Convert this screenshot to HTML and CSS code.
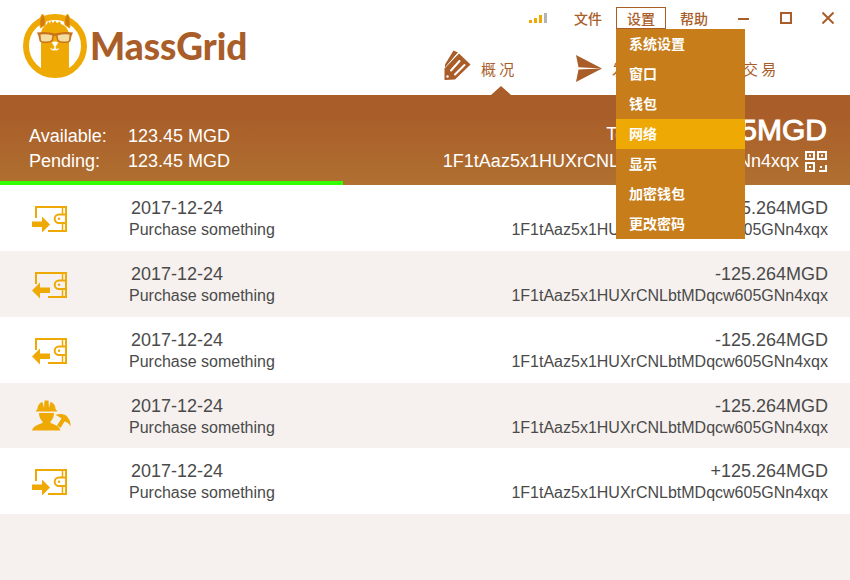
FILE: index.html
```html
<!DOCTYPE html>
<html lang="zh-CN">
<head>
<meta charset="utf-8">
<meta name="viewport" content="width=device-width, initial-scale=1">
<title>MassGrid</title>
<link rel="stylesheet" href="styles.css">
</head>
<body>
<svg width="0" height="0" class="defs" aria-hidden="true">
  <symbol id="wallet" viewBox="0 0 36 27">
    <g fill="none" stroke="currentColor" stroke-width="2">
      <path d="M4 12V1H34V25H16"/>
      <path d="M34 8.500H27a4.300 4.300 0 0 0 0 8.600H34"/>
      <path d="M30.500 2V8.500M30.500 17V24" stroke-width="1.500"/>
    </g>
    <circle cx="27" cy="12.800" r="1.200" fill="currentColor"/>
  </symbol>
  <symbol id="receive" viewBox="0 0 36 27">
    <use href="#wallet"/>
    <path d="M0 15.500H10V10.500L18 18.500L10 26.500V21H0Z" fill="currentColor"/>
  </symbol>
  <symbol id="send" viewBox="0 0 36 27">
    <use href="#wallet"/>
    <path d="M18 15.500H8V10.500L0 18.500L8 26.500V21H18Z" fill="currentColor"/>
  </symbol>
  <symbol id="miner" viewBox="0 0 39 31">
    <g fill="currentColor">
      <path d="M4 11.500C4 10 5 9.500 5.500 9C5.500 5 8 2.500 10.500 2L12 8L12.500 0.500H16.500L17 8L18.500 2C21 2.500 23.500 5 23.500 9C24 9.500 25 10 25 11.500Z"/>
      <path d="M7 13H22C22 17 20.500 19.500 18.500 21.500V23C22 24.500 27 25.500 28.500 30.500H0C1.500 25.500 7 24.500 10.500 23V21.500C8.500 19.500 7 17 7 13Z"/>
      <path d="M23.500 15C27 13.500 31 14 34 15.500C37 18 39 22 38.500 26.500C37 23.500 35 22 32.500 21.500L28.500 28L25 25.500L29.500 18.500C27.500 17 25.500 16 23.500 15Z"/>
    </g>
  </symbol>
</svg>

<header class="header">
  <div class="brand">
    <svg class="brand-mark" viewBox="0 0 64 64" aria-hidden="true">
      <circle cx="32" cy="32" r="29" fill="#fff" stroke="#efa905" stroke-width="6"/>
      <path d="M20 10Q31 3 44 10L42 16H22Z" fill="#fff"/>
      <path d="M18 58V25C17 18 19 13 24 10L25 7L27 9.500L28 6.500L30 9L32 6.500L34 9L37 7.500L38 10C44 12 47 18 46 25V58C38 64 26 64 18 58Z" fill="#efa905"/>
      <path d="M17.500 14C16 8 17 3 19.500 0C22 2 23 7 22 11ZM46.500 14C48 8 47 3 44.500 0C42 2 41 7 42 11Z" fill="#d47b10" stroke="#efa905"/>
      <path d="M14 18.500Q23 17 32 19.500Q41 17 50 18.500L48.500 22L47.500 27Q46 29 41 29Q35 29 34 26L33 22H31L30 26Q29 29 23 29Q18 29 16.500 27L15.500 22Z" fill="#c8731a"/>
      <path d="M17.500 20.500Q24 19.500 29.500 21.500L28.500 26Q27 27.500 23 27.500Q18 27.500 18 26ZM46.500 20.500Q40 19.500 34.500 21.500L35.500 26Q37 27.500 41 27.500Q46 27.500 46 26Z" fill="#f4dda0"/>
      <path d="M29 28.500Q32 27 35 28.500L32.500 32.500V34.500Q34 36 36 34.500Q34 37 32 36Q29 37 27.500 34.500Q30 36 31.500 34.500V32.500Z" fill="#fff" stroke="#fff" stroke-width=".5"/>
    </svg>
    <span class="brand-name">MassGrid</span>
  </div>

  <div class="tools">
    <div class="titlebar">
      <svg class="signal" viewBox="0 0 18 10" role="img" aria-label="signal">
        <path d="M0 7H3V10H0ZM5 5H8V10H5ZM10 2H13V10H10Z" fill="#efa905"/>
        <path d="M15 0H18V10H15Z" fill="#b3b3b3"/>
      </svg>
      <div class="menubar">
        <button class="menu-button" type="button">文件</button>
        <div class="menu-holder">
          <button class="menu-button is-open" type="button" aria-expanded="true">设置</button>
          <div class="menu">
            <button class="menu-item" type="button">系统设置</button>
            <button class="menu-item" type="button">窗口</button>
            <button class="menu-item" type="button">钱包</button>
            <button class="menu-item is-active" type="button">网络</button>
            <button class="menu-item" type="button">显示</button>
            <button class="menu-item" type="button">加密钱包</button>
            <button class="menu-item" type="button">更改密码</button>
          </div>
        </div>
        <button class="menu-button" type="button">帮助</button>
      </div>
      <div class="window-controls">
        <button class="window-button" type="button" aria-label="minimize"><svg viewBox="0 0 12 12"><path d="M0 7H11" stroke="currentColor" stroke-width="2"/></svg></button>
        <button class="window-button" type="button" aria-label="maximize"><svg viewBox="0 0 12 12"><path d="M1 1H11V11H1Z" fill="none" stroke="currentColor" stroke-width="2"/></svg></button>
        <button class="window-button" type="button" aria-label="close"><svg viewBox="0 0 12 12"><path d="M.5 .5L11.500 11.500M11.500 .5L.5 11.500" stroke="currentColor" stroke-width="2"/></svg></button>
      </div>
    </div>
    <nav class="nav">
      <a class="nav-item is-current" href="#">
        <svg class="nav-icon" viewBox="0 0 27 30" aria-hidden="true">
          <path d="M9.500 .5L14 2.500L1 18V14.500Z" fill="currentColor"/>
          <path d="M14 3L1 18" stroke="#fff"/>
          <path d="M15 3.500L26.500 14.500L11 29.500L.5 30V18.500Z" fill="currentColor"/>
          <path d="M7 20.500L15.500 11M11 24.500L20.500 15" stroke="#fff" stroke-width="2" stroke-linecap="round"/>
          <circle cx="3.500" cy="26.500" r="1.200" fill="#fff"/>
        </svg>
        <span>概 况</span>
      </a>
      <a class="nav-item" href="#">
        <svg class="nav-icon" viewBox="0 0 27 30" aria-hidden="true">
          <path d="M1 5L27 18.500L3.500 17.300ZM3.500 19.500L27 18.500L1 32Z" fill="currentColor"/>
        </svg>
        <span>发 送</span>
      </a>
      <a class="nav-item" href="#">
        <svg class="nav-icon" viewBox="0 0 27 30" aria-hidden="true">
          <path d="M3 11H24L18 5M24 19H3L9 25" fill="none" stroke="currentColor" stroke-width="3"/>
        </svg>
        <span>交 易</span>
      </a>
    </nav>
  </div>
</header>

<section class="balance">
  <dl class="funds">
    <dt>Available:</dt><dd>123.45 MGD</dd>
    <dt>Pending:</dt><dd>123.45 MGD</dd>
  </dl>
  <div class="account">
    <div class="total"><span>Total:</span><strong>123.45MGD</strong></div>
    <div class="address">
      <span>1F1tAaz5x1HUXrCNLbtMDqcw605GNn4xqx</span>
      <svg class="qr" viewBox="0 0 22 21" aria-hidden="true">
        <path d="M1 1H9V8H1ZM13 1H21V8H13ZM1 12H9V20H1Z" fill="none" stroke="#fff" stroke-width="2"/>
        <path d="M4 3.500H6V5.500H4ZM16 3.500H18V5.500H16ZM4 15H6V17H4ZM15 15H17V17H15ZM20 14H22V21H14V19H20Z" fill="#fff"/>
      </svg>
    </div>
  </div>
  <div class="sync"><div class="sync-bar" style="width:40.4%"></div></div>
</section>

<main class="history">
  <article class="entry">
    <svg class="entry-icon" viewBox="0 0 36 27" aria-hidden="true"><use href="#receive"/></svg>
    <div class="entry-what"><time>2017-12-24</time><p>Purchase something</p></div>
    <div class="entry-sum"><b>+125.264MGD</b><p>1F1tAaz5x1HUXrCNLbtMDqcw605GNn4xqx</p></div>
  </article>
  <article class="entry">
    <svg class="entry-icon" viewBox="0 0 36 27" aria-hidden="true"><use href="#send"/></svg>
    <div class="entry-what"><time>2017-12-24</time><p>Purchase something</p></div>
    <div class="entry-sum"><b>-125.264MGD</b><p>1F1tAaz5x1HUXrCNLbtMDqcw605GNn4xqx</p></div>
  </article>
  <article class="entry">
    <svg class="entry-icon" viewBox="0 0 36 27" aria-hidden="true"><use href="#send"/></svg>
    <div class="entry-what"><time>2017-12-24</time><p>Purchase something</p></div>
    <div class="entry-sum"><b>-125.264MGD</b><p>1F1tAaz5x1HUXrCNLbtMDqcw605GNn4xqx</p></div>
  </article>
  <article class="entry">
    <svg class="entry-icon entry-icon-wide" viewBox="0 0 39 31" aria-hidden="true"><use href="#miner"/></svg>
    <div class="entry-what"><time>2017-12-24</time><p>Purchase something</p></div>
    <div class="entry-sum"><b>-125.264MGD</b><p>1F1tAaz5x1HUXrCNLbtMDqcw605GNn4xqx</p></div>
  </article>
  <article class="entry">
    <svg class="entry-icon" viewBox="0 0 36 27" aria-hidden="true"><use href="#receive"/></svg>
    <div class="entry-what"><time>2017-12-24</time><p>Purchase something</p></div>
    <div class="entry-sum"><b>+125.264MGD</b><p>1F1tAaz5x1HUXrCNLbtMDqcw605GNn4xqx</p></div>
  </article>
  <div class="entry"></div>
</main>
</body>
</html>
```
FILE: styles.css
```css
:root {
  --brown: #a95d29;
  --gold: #efa905;
}

* {
  box-sizing: border-box;
}

body {
  margin: 0;
  min-height: 100vh;
  display: flex;
  flex-direction: column;
  background: #fff;
  color: #4a4a4a;
  font: 16px/22px "Liberation Sans", "Noto Sans CJK SC", sans-serif;
}

p,
dl,
dd {
  margin: 0;
}

svg {
  display: block;
}

.defs {
  position: absolute;
}

button {
  border: 0;
  padding: 0;
  background: none;
  color: inherit;
  font: inherit;
}

/* Header */
.header {
  display: flex;
  justify-content: space-between;
  color: var(--brown);
}

.brand {
  display: flex;
  align-items: center;
  gap: 3px;
  padding: 14px 0 17px 23px;
}

.brand-mark {
  width: 64px;
  height: 64px;
  overflow: visible;
}

.brand-name {
  font: 900 37px/42px Lato, sans-serif;
}

.tools {
  display: flex;
  flex-direction: column;
  font-family: "Noto Sans CJK SC", sans-serif;
}

.titlebar {
  display: flex;
  align-items: center;
  justify-content: flex-end;
  padding-top: 7px;
}

.signal {
  width: 18px;
  height: 10px;
  margin-right: 16px;
}

.menubar {
  display: flex;
  gap: 3px;
  font-size: 14px;
  font-weight: 500;
}

.menu-button {
  display: block;
  height: 22px;
  padding: 0 10px;
  border: 1px solid transparent;
  line-height: 20px;
}

.menu-button.is-open {
  border-color: var(--brown);
}

.menu-holder {
  position: relative;
}

.menu {
  position: absolute;
  z-index: 1;
  top: 100%;
  left: 0;
  width: 129px;
  background: #c67d1a;
  color: #fff;
}

.menu-item {
  display: block;
  width: 100%;
  padding: 0 0 2px 13px;
  font-weight: 700;
  line-height: 28px;
  text-align: left;
}

.menu-item.is-active {
  background: var(--gold);
}

.window-controls {
  display: flex;
  margin: 0 1px 0 4px;
}

.window-button {
  display: flex;
  justify-content: center;
  width: 42px;
}

.window-button svg {
  width: 12px;
  height: 12px;
}

.nav {
  flex: 1;
  display: grid;
  grid-template-columns: repeat(3, 131px);
  padding-right: 13px;
  font-size: 15px;
}

.nav-item {
  position: relative;
  display: flex;
  gap: 10px;
  padding-top: 21px;
  color: inherit;
  line-height: 38px;
  text-decoration: none;
}

.nav-icon {
  width: 27px;
  height: 30px;
  overflow: visible;
}

.nav-item.is-current::after {
  content: "";
  position: absolute;
  bottom: 0;
  left: 47px;
  border: 10px solid transparent;
  border-top: 0;
  border-bottom: 9px solid var(--brown);
}

/* Balance */
.balance {
  position: relative;
  display: flex;
  justify-content: space-between;
  padding: 20px 23px 11px 29px;
  background: linear-gradient(#a95d29 20%, #b07030);
  color: #fff;
  font-size: 18px;
  line-height: 25px;
}

.funds {
  display: grid;
  grid-template-columns: 99px auto;
  align-content: end;
}

.total {
  display: flex;
  align-items: baseline;
  justify-content: flex-end;
  gap: 16px;
  line-height: 30px;
}

.total strong {
  font-size: 30px;
  font-weight: 400;
  -webkit-text-stroke: 1px currentColor;
}

.address {
  display: flex;
  align-items: center;
  gap: 6px;
}

.qr {
  width: 22px;
  height: 21px;
}

.sync {
  position: absolute;
  right: 0;
  bottom: 0;
  left: 0;
}

.sync-bar {
  height: 4px;
  background: #3f0;
}

/* History */
.history {
  flex: 1;
  display: grid;
  grid-auto-rows: 1fr;
}

.entry {
  display: flex;
  padding: 12px 22px 8px 32px;
}

.entry:nth-child(even) {
  background: #f6f1ee;
}

.entry-icon {
  width: 36px;
  height: 27px;
  margin: 9px 61px 0 0;
  color: var(--gold);
}

.entry-icon-wide {
  width: 39px;
  height: 31px;
  margin: 5px 58px 0 0;
}

.entry-what {
  flex: 1;
}

.entry-what time,
.entry-sum b {
  display: block;
  font-size: 18px;
  font-weight: 400;
}

.entry-what time {
  padding-left: 2px;
}

.entry-sum {
  text-align: right;
}
```
